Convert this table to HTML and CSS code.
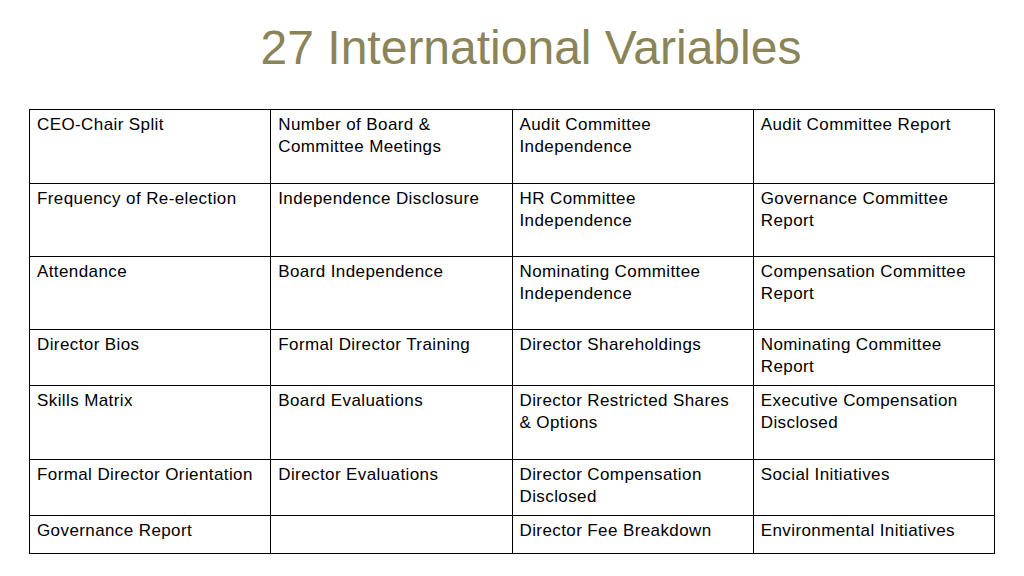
FILE: index.html
```html
<!DOCTYPE html>
<html>
<head>
<meta charset="utf-8">
<link rel="stylesheet" href="styles.css">
</head>
<body>
<div class="slide">
  <h1 class="title">27 International Variables</h1>
  <table class="vars">
    <tr class="r74">
      <td>CEO-Chair Split</td>
      <td>Number of Board &amp;<br>Committee Meetings</td>
      <td>Audit Committee<br>Independence</td>
      <td>Audit Committee Report</td>
    </tr>
    <tr class="r73">
      <td>Frequency of Re-election</td>
      <td>Independence Disclosure</td>
      <td>HR Committee<br>Independence</td>
      <td>Governance Committee<br>Report</td>
    </tr>
    <tr class="r73">
      <td>Attendance</td>
      <td>Board Independence</td>
      <td>Nominating Committee<br>Independence</td>
      <td>Compensation Committee<br>Report</td>
    </tr>
    <tr class="r56">
      <td>Director Bios</td>
      <td>Formal Director Training</td>
      <td>Director Shareholdings</td>
      <td>Nominating Committee<br>Report</td>
    </tr>
    <tr class="r74">
      <td>Skills Matrix</td>
      <td>Board Evaluations</td>
      <td>Director Restricted Shares<br>&amp; Options</td>
      <td>Executive Compensation<br>Disclosed</td>
    </tr>
    <tr class="r56">
      <td>Formal Director Orientation</td>
      <td>Director Evaluations</td>
      <td>Director Compensation<br>Disclosed</td>
      <td>Social Initiatives</td>
    </tr>
    <tr class="r38">
      <td>Governance Report</td>
      <td></td>
      <td>Director Fee Breakdown</td>
      <td>Environmental Initiatives</td>
    </tr>
  </table>
</div>
</body>
</html>
```

FILE: styles.css
```css
html, body {
  margin: 0;
  padding: 0;
  background: #ffffff;
}
.slide {
  width: 1024px;
  height: 576px;
  padding: 0 0 0 29px;
  box-sizing: border-box;
  font-family: "Liberation Sans", Arial, sans-serif;
}
.title {
  margin: 0;
  height: 109px;
  box-sizing: border-box;
  padding: 20px 0 0 38px;
  font-weight: normal;
  font-size: 48px;
  line-height: 56px;
  color: #8b8458;
  text-align: center;
  width: 966px;
}
.vars {
  border-collapse: collapse;
  width: 966px;
  table-layout: fixed;
}
.vars td {
  border: 1px solid #000;
  vertical-align: top;
  padding: 4px 7px 0 7px;
  font-size: 17px;
  line-height: 22px;
  letter-spacing: 0.4px;
  color: #000;
  width: 25%;
}
.r74 { height: 74px; }
.r73 { height: 73px; }
.r56 { height: 56px; }
.r38 { height: 38px; }
```
